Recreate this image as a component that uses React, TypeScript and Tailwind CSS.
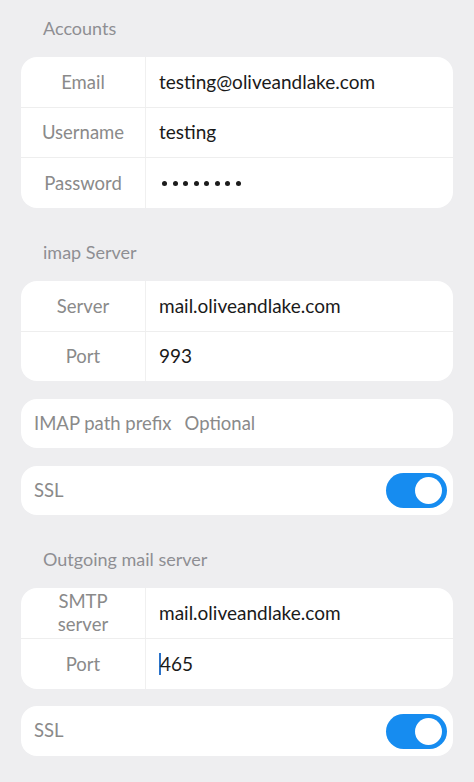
const font = { fontFamily: "Lato, 'Noto Sans', sans-serif" };

function SectionTitle({ children }: { children: string }) {
  return (
    <div className="h-[57px] flex items-center pl-[43px] text-[18px] text-[#8e8e93]">
      {children}
    </div>
  );
}

type Row = {
  label: string;
  value: string;
  twoLine?: boolean;
  cursor?: boolean;
  dots?: boolean;
  tall?: boolean;
};

function PasswordDots() {
  return (
    <span className="flex gap-[5.5px] ml-[3px]">
      {Array.from({ length: 8 }).map((_, i) => (
        <span key={i} className="w-[5px] h-[5px] rounded-full bg-[#1c1c1c]" />
      ))}
    </span>
  );
}

function FieldCard({ rows }: { rows: Row[] }) {
  return (
    <div className="mx-[21px] bg-white rounded-[16px] overflow-hidden">
      {rows.map((row, i) => (
        <div
          key={row.label}
          className={`flex ${row.tall ? "h-[51px]" : "h-[50px]"} ${i > 0 ? "border-t border-[#eeeeee]" : ""}`}
        >
          <div className="w-[125px] shrink-0 border-r border-[#f0f0f0] flex items-center justify-center text-center text-[18.5px] leading-[23px] text-[#8a8a8a]">
            {row.twoLine ? (
              <span className="w-[70px]">{row.label}</span>
            ) : (
              row.label
            )}
          </div>
          <div className="flex-1 flex items-center pl-[13px] text-[19px] text-[#1a1a1a]">
            {row.cursor && <span className="w-[2px] h-[22px] bg-[#2a72c9] -mr-[1px]" />}
            {row.dots ? <PasswordDots /> : row.value}
          </div>
        </div>
      ))}
    </div>
  );
}

function Toggle() {
  return (
    <div className="w-[61px] h-[35px] rounded-full bg-[#168cf0] flex items-center justify-end pr-[5px]">
      <div className="w-[27px] h-[27px] rounded-full bg-white" />
    </div>
  );
}

function SslCard({ height }: { height: string }) {
  return (
    <div
      className={`mx-[21px] ${height} bg-white rounded-[16px] flex items-center justify-between pl-[13px] pr-[6px]`}
    >
      <span className="text-[18.5px] text-[#8a8a8a]">SSL</span>
      <Toggle />
    </div>
  );
}

export default function App() {
  return (
    <div className="w-[474px] h-[782px] bg-[#eeeef0] overflow-hidden" style={font}>
      <SectionTitle>Accounts</SectionTitle>
      <FieldCard
        rows={[
          { label: "Email", value: "testing@oliveandlake.com" },
          { label: "Username", value: "testing" },
          { label: "Password", value: "", dots: true, tall: true },
        ]}
      />
      <div className="h-[16px]" />
      <SectionTitle>imap Server</SectionTitle>
      <FieldCard
        rows={[
          { label: "Server", value: "mail.oliveandlake.com" },
          { label: "Port", value: "993" },
        ]}
      />
      <div className="h-[18px]" />
      <div className="mx-[21px] h-[49px] bg-white rounded-[16px] flex items-center pl-[13px] text-[18.5px] text-[#8a8a8a]">
        <span>IMAP path prefix</span>
        <span className="ml-[13px]">Optional</span>
      </div>
      <div className="h-[18px]" />
      <SslCard height="h-[49px]" />
      <div className="h-[16px]" />
      <SectionTitle>Outgoing mail server</SectionTitle>
      <FieldCard
        rows={[
          { label: "SMTP server", value: "mail.oliveandlake.com", twoLine: true },
          { label: "Port", value: "465", cursor: true, tall: true },
        ]}
      />
      <div className="h-[17px]" />
      <SslCard height="h-[50px]" />
    </div>
  );
}
